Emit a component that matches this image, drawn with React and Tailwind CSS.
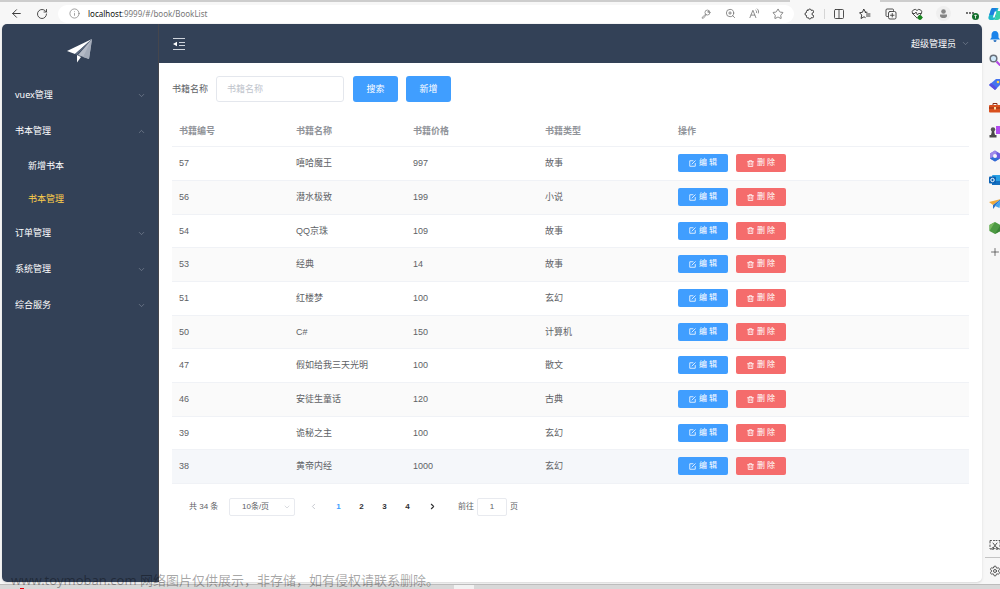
import { useState } from "react";
import {
  ArrowLeft,
  RotateCw,
  Info,
  ZoomIn,
  Star,
  Columns2,
  ChevronDown,
  ChevronUp,
  ChevronLeft,
  ChevronRight,
  Plus,
  Settings,
} from "lucide-react";

const menus = [
  { title: "vuex管理" },
  {
    title: "书本管理",
    open: true,
    children: [{ title: "新增书本" }, { title: "书本管理", active: true }],
  },
  { title: "订单管理" },
  { title: "系统管理" },
  { title: "综合服务" },
];

const books = [
  { id: 57, name: "嘻哈魔王", price: 997, type: "故事" },
  { id: 56, name: "潜水极致", price: 199, type: "小说" },
  { id: 54, name: "QQ京珠", price: 109, type: "故事" },
  { id: 53, name: "经典", price: 14, type: "故事" },
  { id: 51, name: "红楼梦", price: 100, type: "玄幻" },
  { id: 50, name: "C#", price: 150, type: "计算机" },
  { id: 47, name: "假如给我三天光明", price: 100, type: "散文" },
  { id: 46, name: "安徒生童话", price: 120, type: "古典" },
  { id: 39, name: "诡秘之主", price: 100, type: "玄幻" },
  { id: 38, name: "黄帝内经", price: 1000, type: "玄幻" },
];

/* ---------- icons ---------- */

function Svg({ size = 12, box = 24, width = 1.8, className, children }) {
  return (
    <svg
      width={size}
      height={size}
      viewBox={`0 0 ${box} ${box}`}
      fill="none"
      stroke="currentColor"
      strokeWidth={width}
      strokeLinecap="round"
      strokeLinejoin="round"
      className={className}
      aria-hidden="true"
    >
      {children}
    </svg>
  );
}

const KeyIcon = () => (
  <Svg size={10}>
    <circle cx="15.5" cy="8.5" r="6" />
    <path d="M11 12.5 2.5 20.5v1.5H6l6.5-8" />
    <circle cx="17" cy="7" r="1" />
  </Svg>
);

const ReadAloudIcon = () => (
  <Svg size={11}>
    <path d="M2 21 8.5 5 15 21M4.5 15.5h8M15 5c1.500 1 2 3 1.500 5M18 2c3 2.500 3.500 6 2.500 9" />
  </Svg>
);

const ExtensionIcon = () => (
  <Svg size={12} width={2}>
    <path d="M7 4.500h2a2.500 2.500 0 0 1 5 0h3a2 2 0 0 1 2 2V9a3 3 0 1 0 0 6v2.500a2 2 0 0 1-2 2h-3a2.500 2.500 0 0 1-5 0H7a2 2 0 0 1-2-2V15a2.700 2.700 0 0 1 0-6V6.500a2 2 0 0 1 2-2z" />
  </Svg>
);

const FavoritesIcon = () => (
  <Svg size={12} width={2}>
    <path d="M13 8.500 9.500 2 7 8.500 1 9.500l4.500 4.500L4 21l6-3.500 2.500 1.500M13 8.500h3M15 12h7M15 16h7M13 8.500l-.5 0" />
  </Svg>
);

const CollectionsIcon = () => (
  <Svg size={12}>
    <path d="M5 17H4a2 2 0 0 1-2-2V4a2 2 0 0 1 2-2h11a2 2 0 0 1 2 2v1" />
    <rect x="7" y="7" width="15" height="15" rx="3" />
    <path d="M14.500 11v7M11 14.500h7" />
  </Svg>
);

const HealthIcon = () => (
  <Svg size={12}>
    <path d="M12 20 3.500 11.500A5 5 0 0 1 12 5a5 5 0 0 1 8.500 6.500z" />
    <path d="M3 11h5l2-3 3 6 2-3h5" />
    <circle cx="18" cy="19" r="4" fill="#17851f" stroke="#17851f" />
  </Svg>
);

const ProfileIcon = () => (
  <svg width="15" height="15" viewBox="0 0 15 15" aria-hidden="true">
    <circle cx="7.500" cy="7.500" r="7.500" fill="#efefef" />
    <circle cx="7.500" cy="5.500" r="2.300" fill="#858585" />
    <path d="M4 8.500h7v1.200c0 1.600-1.500 2.300-3.500 2.300S4 11.300 4 9.700z" fill="#858585" />
  </svg>
);

const MoreIcon = () => (
  <svg width="16" height="16" viewBox="0 0 16 16" aria-hidden="true">
    <g fill="#333">
      <circle cx="3" cy="7" r="0.900" />
      <circle cx="6" cy="7" r="0.900" />
      <circle cx="9" cy="7" r="0.900" />
    </g>
    <circle cx="11.500" cy="10.500" r="3.500" fill="#12702c" />
    <path d="M11.500 12.500V9M10.300 10l1.200-1.200 1.200 1.200" stroke="#fff" strokeWidth="0.800" fill="none" />
  </svg>
);

const CopilotIcon = () => (
  <svg width="14" height="14" viewBox="0 0 14 14" className="shrink-0" aria-hidden="true">
    <path d="M5 1h5.500L7.500 11c-.5 1.300-1.200 2-2.500 2H2.500C.8 13 0 11.500.5 10L3 2.500C3.400 1.500 4 1 5 1z" fill="#1fb6c9" />
    <path d="M5 1h4L5.500 8H1.200L3 2.500C3.400 1.500 4 1 5 1z" fill="#1c7fe0" />
    <path d="M9 4h2.500c1.700 0 2.500 1.200 2 2.800l-1.200 4c-.4 1.400-1.300 2.200-2.800 2.200H5c1.500 0 2-1 2.400-2.300z" fill="#35d0a5" />
    <path d="m8.500 4.500-2 6H4.800l2-6z" fill="#fff" />
  </svg>
);

const CollapseIcon = () => (
  <svg width="14" height="14" viewBox="0 0 14 14" fill="none" stroke="#cfd4dc" aria-hidden="true">
    <path d="M1 1.500h12M7 5.500h6M7 8.500h6M1 12.500h12" />
    <path d="M1 7l4-2.300v4.600z" fill="#fff" stroke="none" />
  </svg>
);

const PlaneLogo = () => (
  <svg width="26" height="24" viewBox="0 0 26 24" aria-hidden="true">
    <path d="M25 0 0 12l8 3z" fill="#fff" />
    <path d="M25 0 8 15l2 1z" fill="#5d6b80" />
    <path d="M25 0 11 16l11 4z" fill="#b4bac6" />
    <path d="M25 0 16 18l6 2z" fill="#a3abb9" />
    <path d="M10 16v7.500l4-5.500z" fill="#fff" />
  </svg>
);

const EditIcon = () => (
  <Svg size={7} box={14} width={1.6}>
    <path d="M8 1.500H1.500v11h11V7M12.500 1.500 6 8" />
  </Svg>
);

const DeleteIcon = () => (
  <Svg size={7} box={14} width={1.5}>
    <path d="M1 3.500h12M4.500 3.500V1.200h5v2.300M2.500 3.500v9.500h9V3.500M5.500 6.500v3.500M8.500 6.500v3.500" />
  </Svg>
);

const sideApps = [
  {
    label: "通知",
    icon: (
      <>
        <path d="M6 1c-2.300 0-3.500 1.700-3.500 4v2.500L1 9.500h10L9.500 7.500V5C9.500 2.700 8.300 1 6 1z" fill="#1a83ea" />
        <path d="M4.500 10.300h3c0 1-.7 1.700-1.500 1.700s-1.500-.7-1.500-1.700z" fill="#0d5fb8" />
      </>
    ),
  },
  {
    label: "搜索",
    icon: (
      <>
        <path d="m7.500 7.500 4 4" stroke="#b346e6" strokeWidth="2.200" />
        <circle cx="4.500" cy="4.500" r="3.300" fill="#cfe8fa" stroke="#69707a" strokeWidth="1.500" />
      </>
    ),
  },
  {
    label: "购物",
    icon: (
      <>
        <path d="M7 1h5v5l-6 6L0 7z" fill="#4574f0" />
        <path d="m0 7 2-2 6 5-2 2z" fill="#5a4fe0" />
        <circle cx="9" cy="4" r="1.300" fill="#ffd34d" />
      </>
    ),
  },
  {
    label: "工具",
    icon: (
      <>
        <path d="M4 3V1.500h4V3" fill="none" stroke="#8b2c12" />
        <rect x="0" y="3" width="12" height="7.500" rx="1" fill="#d9501e" />
        <path d="M0 6h12" stroke="#8b2c12" />
        <rect x="5" y="5" width="2" height="2.500" fill="#ffd9a0" />
      </>
    ),
  },
  {
    label: "游戏",
    icon: (
      <>
        <path d="M7 0h5v8H7z" fill="#b14cf0" />
        <circle cx="4" cy="3.500" r="2.200" fill="#555" />
        <path d="M3 5h2l1 4h1.500v2.500h-7V9H2z" fill="#4a4a4a" />
      </>
    ),
  },
  {
    label: "Microsoft 365",
    icon: (
      <>
        <path d="M6 .5 11 3.500v5L6 11.500 1 8.500v-5z" fill="#6a5be0" />
        <path d="M1 3.500 6 .5l2 2.500-4 3-1 3.500-2-1z" fill="#a08bea" />
        <path d="m1 8.500 3-1.500 4 1 3 .5-5 3z" fill="#2d6fd2" />
        <circle cx="6" cy="6" r="2" fill="#f7f7f7" />
      </>
    ),
  },
  {
    label: "Outlook",
    icon: (
      <>
        <rect x="3" y="1" width="9" height="10" rx="1" fill="#28a0e4" />
        <path d="M3 7h9v4H3z" fill="#1470c0" />
        <rect x="0" y="2.500" width="7" height="7" rx="1" fill="#0b62b4" />
        <circle cx="3.500" cy="6" r="1.700" fill="none" stroke="#fff" />
      </>
    ),
  },
  {
    label: "Drop",
    icon: (
      <>
        <path d="M12 1 0 4l4 3z" fill="#f0a93a" />
        <path d="M12 1 4 7v4l2-2.500z" fill="#2a72c9" />
        <path d="m12 1-6 7 4.500 2z" fill="#45a4ee" />
      </>
    ),
  },
  {
    label: "树",
    icon: (
      <>
        <path d="m6 0 5.500 3v6L6 12 .5 9V3z" fill="#4d9a43" />
        <path d="M6 0 .5 3v6z" fill="#76b85e" />
        <path d="m6 12 5.500-3V3z" fill="#3b8437" />
      </>
    ),
  },
];

/* ---------- browser frame ---------- */

function IconButton({ label, className = "", children }) {
  return (
    <button
      type="button"
      aria-label={label}
      className={`flex h-4 w-4 shrink-0 items-center justify-center ${className}`}
    >
      {children}
    </button>
  );
}

function BrowserBar() {
  return (
    <div className="flex h-[21px] shrink-0 items-center overflow-hidden bg-[#f7f7f7] pl-2 text-[#3c3c3c]">
      <IconButton label="返回">
        <ArrowLeft size={13} strokeWidth={1.800} />
      </IconButton>
      <IconButton label="刷新" className="ml-[10px]">
        <RotateCw size={12} strokeWidth={1.800} />
      </IconButton>
      <div className="ml-2 flex h-[18px] min-w-0 flex-1 items-center rounded-full bg-white pr-2 pl-2 text-[#777]">
        <IconButton label="站点信息">
          <Info size={11} strokeWidth={1.500} />
        </IconButton>
        <div className="ml-[6px] flex-1 truncate font-['Noto_Sans',sans-serif] text-[8px] leading-4">
          <span className="text-[#111]">localhost</span>:9999/#/book/BookList
        </div>
        <div className="flex gap-2">
          <IconButton label="密码">
            <KeyIcon />
          </IconButton>
          <IconButton label="缩放">
            <ZoomIn size={11} strokeWidth={1.800} />
          </IconButton>
          <IconButton label="朗读">
            <ReadAloudIcon />
          </IconButton>
          <IconButton label="收藏">
            <Star size={12} strokeWidth={1.800} />
          </IconButton>
        </div>
      </div>
      <div className="ml-2 flex items-center">
        <IconButton label="扩展">
          <ExtensionIcon />
        </IconButton>
        <span className="mx-[6px] h-[10px] w-px bg-[#d5d5d5]" />
        <div className="flex gap-[10px]">
          <IconButton label="拆分屏幕">
            <Columns2 size={12} strokeWidth={1.800} />
          </IconButton>
          <IconButton label="收藏夹">
            <FavoritesIcon />
          </IconButton>
          <IconButton label="集锦">
            <CollectionsIcon />
          </IconButton>
          <IconButton label="浏览器概要">
            <HealthIcon />
          </IconButton>
          <IconButton label="用户">
            <ProfileIcon />
          </IconButton>
          <IconButton label="更多" className="ml-[3px]">
            <MoreIcon />
          </IconButton>
        </div>
        <button type="button" aria-label="Copilot" className="ml-2 w-3">
          <CopilotIcon />
        </button>
      </div>
    </div>
  );
}

function EdgeSidebar() {
  return (
    <aside className="flex w-[18px] shrink-0 flex-col overflow-hidden pl-[7px] text-[#444]">
      {sideApps.map((app) => (
        <button
          key={app.label}
          type="button"
          aria-label={app.label}
          className="flex h-6 w-3 shrink-0 items-center"
        >
          <svg width="12" height="12" viewBox="0 0 12 12" aria-hidden="true">
            {app.icon}
          </svg>
        </button>
      ))}
      <button type="button" aria-label="添加" className="flex h-6 w-3 shrink-0 items-center">
        <Plus size={12} strokeWidth={1.500} />
      </button>
      <button type="button" aria-label="截图" className="mt-auto flex h-6 w-3 items-center">
        <Svg size={12} className="shrink-0">
          <path d="M2 8V3h3M9 3h2M14 3h2M20 3h2v5M2 12v3M22 12v3M2 19v1h3M20 20h2" />
          <path d="m8 8 7 9M16 8l-7 9" />
          <circle cx="8" cy="19" r="2" />
          <circle cx="16" cy="19" r="2" />
        </Svg>
      </button>
      <hr className="-ml-1 border-[#c4c4c4]" />
      <button type="button" aria-label="设置" className="flex h-[26px] w-3 items-center">
        <Settings size={12} strokeWidth={1.800} className="shrink-0" />
      </button>
    </aside>
  );
}

/* ---------- admin app ---------- */

function SideMenu() {
  return (
    <nav className="w-[157px] shrink-0 border-r border-[#45464d] bg-[#334157] font-['Noto_Sans','Noto_Sans_CJK_SC',sans-serif] text-[9px] text-white">
      <div className="flex h-[53px] items-center justify-center">
        <PlaneLogo />
      </div>
      <ul>
        {menus.map((menu) => (
          <li key={menu.title}>
            <button
              type="button"
              aria-expanded={!!menu.open}
              className="flex h-9 w-full items-center justify-between pr-3 pl-[13px]"
            >
              {menu.title}
              {menu.open ? (
                <ChevronUp size={9} strokeWidth={1.500} className="text-[#8b94a2]" />
              ) : (
                <ChevronDown size={9} strokeWidth={1.500} className="text-[#8b94a2]" />
              )}
            </button>
            {menu.children && (
              <ul>
                {menu.children.map((child) => (
                  <li key={child.title}>
                    <a
                      href="#/book/BookList"
                      className={`flex h-[33px] items-center pl-[26px] ${
                        child.active ? "text-[#ffd04b]" : "text-white"
                      }`}
                    >
                      {child.title}
                    </a>
                  </li>
                ))}
              </ul>
            )}
          </li>
        ))}
      </ul>
    </nav>
  );
}

function TopHeader() {
  return (
    <header className="flex h-[39px] shrink-0 items-center justify-between bg-[#334157] pr-3 pl-[13px] text-white">
      <button type="button" aria-label="折叠菜单">
        <CollapseIcon />
      </button>
      <button type="button" className="flex items-center gap-[5px]">
        超级管理员
        <ChevronDown size={9} strokeWidth={1.500} className="text-[#8b94a2]" />
      </button>
    </header>
  );
}

function SearchForm() {
  const [keyword, setKeyword] = useState("");

  return (
    <form className="flex items-center" onSubmit={(e) => e.preventDefault()}>
      <label htmlFor="bookname" className="pr-2 text-[#606266]">
        书籍名称
      </label>
      <input
        id="bookname"
        value={keyword}
        onChange={(e) => setKeyword(e.target.value)}
        placeholder="书籍名称"
        className="h-[26px] w-32 rounded-[3px] border border-[#e4e7ed] px-[10px] outline-none placeholder:text-[#c0c4cc]"
      />
      <button type="submit" className="ml-[9px] h-[26px] w-[45px] rounded-[3px] bg-[#409eff] text-white">
        搜索
      </button>
      <button type="button" className="ml-2 h-[26px] w-[45px] rounded-[3px] bg-[#409eff] text-white">
        新增
      </button>
    </form>
  );
}

function BookTable() {
  return (
    <table className="mt-[14px] w-full table-fixed text-left text-[#606266]">
      <thead>
        <tr className="h-[30px] border-b border-[#f0f2f6] text-[#909399] [&>th]:px-[7px] [&>th]:font-bold">
          <th className="w-[117px]">书籍编号</th>
          <th className="w-[117px]">书籍名称</th>
          <th className="w-[132px]">书籍价格</th>
          <th className="w-[133px]">书籍类型</th>
          <th>操作</th>
        </tr>
      </thead>
      <tbody>
        {books.map((book, i) => (
          <tr
            key={book.id}
            className={`h-[34px] border-b border-[#f0f2f6] nth-[3n]:h-[33px] [&>td]:px-[7px] ${
              i === books.length - 1 ? "bg-[#f5f7fa]" : "even:bg-[#fafafa]"
            }`}
          >
            <td>{book.id}</td>
            <td>{book.name}</td>
            <td>{book.price}</td>
            <td>{book.type}</td>
            <td>
              <div className="flex gap-2 text-[8px] text-white">
                <button
                  type="button"
                  className="flex h-[18px] w-[50px] items-center justify-center gap-[3px] rounded-[2px] bg-[#409eff]"
                >
                  <EditIcon />
                  编 辑
                </button>
                <button
                  type="button"
                  className="flex h-[18px] w-[50px] items-center justify-center gap-[3px] rounded-[2px] bg-[#f56c6c]"
                >
                  <DeleteIcon />
                  删 除
                </button>
              </div>
            </td>
          </tr>
        ))}
      </tbody>
    </table>
  );
}

function Pagination() {
  const [page, setPage] = useState(1);

  return (
    <div className="mt-[14px] flex items-center pl-[17px] text-[8px] text-[#606266]">
      <span className="w-10">共 34 条</span>
      <div className="relative">
        <select
          aria-label="每页条数"
          className="h-[18px] w-[66px] appearance-none rounded-[2px] border border-[#e8eaef] bg-white pl-3"
        >
          <option>10条/页</option>
          <option>20条/页</option>
        </select>
        <ChevronDown
          size={8}
          strokeWidth={1.500}
          className="pointer-events-none absolute top-[5px] right-1 text-[#b4b8c0]"
        />
      </div>
      <div className="ml-[7px] flex font-bold [&>button]:flex [&>button]:h-[18px] [&>button]:w-[23px] [&>button]:items-center [&>button]:justify-center">
        <button type="button" aria-label="上一页" className="mr-[2px] text-[#b4b8c0]">
          <ChevronLeft size={9} />
        </button>
        {[1, 2, 3, 4].map((n) => (
          <button
            key={n}
            type="button"
            onClick={() => setPage(n)}
            className={n === page ? "text-[#409eff]" : "text-[#303133]"}
          >
            {n}
          </button>
        ))}
        <button type="button" aria-label="下一页" className="ml-[2px] text-[#303133]">
          <ChevronRight size={9} strokeWidth={3} />
        </button>
      </div>
      <label htmlFor="goto" className="ml-[14px]">
        前往
      </label>
      <input
        id="goto"
        defaultValue="1"
        className="mx-[3px] h-[18px] w-[30px] rounded-[2px] border border-[#e8eaef] text-center"
      />
      <span>页</span>
    </div>
  );
}

function App() {
  return (
    <div className="relative flex h-screen flex-col overflow-hidden bg-[#f7f7f7] font-['Liberation_Sans','Noto_Sans_CJK_SC',sans-serif] text-[9px] leading-3">
      {/* bottom edge of the tab strip, the active tab is the light part */}
      <div className="flex h-[2px] shrink-0 bg-[#cdcdcd]">
        <div className="ml-[79%] w-[9%] bg-[#f7f7f7]" />
      </div>
      <div className="h-px shrink-0" />
      <BrowserBar />

      <div className="flex min-h-0 flex-1">
        <div className="mb-[2px] ml-[2px] flex min-w-0 flex-1 overflow-hidden rounded-[5px] bg-white shadow-sm">
          <SideMenu />
          <div className="flex min-w-0 flex-1 flex-col">
            <TopHeader />
            <main className="flex-1 p-[13px]">
              <SearchForm />
              <BookTable />
              <Pagination />
            </main>
          </div>
        </div>
        <EdgeSidebar />
      </div>

      {/* taskbar */}
      <div className="flex h-[5px] shrink-0 items-end border-t border-[#bcbcbc] bg-[#d8d8d8]">
        <span className="ml-5 h-px w-1 bg-red-600" />
        <span className="ml-[43%] h-1 w-5 bg-[#f2f2f2]" />
      </div>

      <p className="pointer-events-none absolute bottom-px left-[11px] font-['Noto_Sans','Noto_Sans_CJK_SC',sans-serif] text-[13px] leading-4 whitespace-nowrap text-black/35">
        www.toymoban.com 网络图片仅供展示，非存储，如有侵权请联系删除。
      </p>
    </div>
  );
}

export default App;
